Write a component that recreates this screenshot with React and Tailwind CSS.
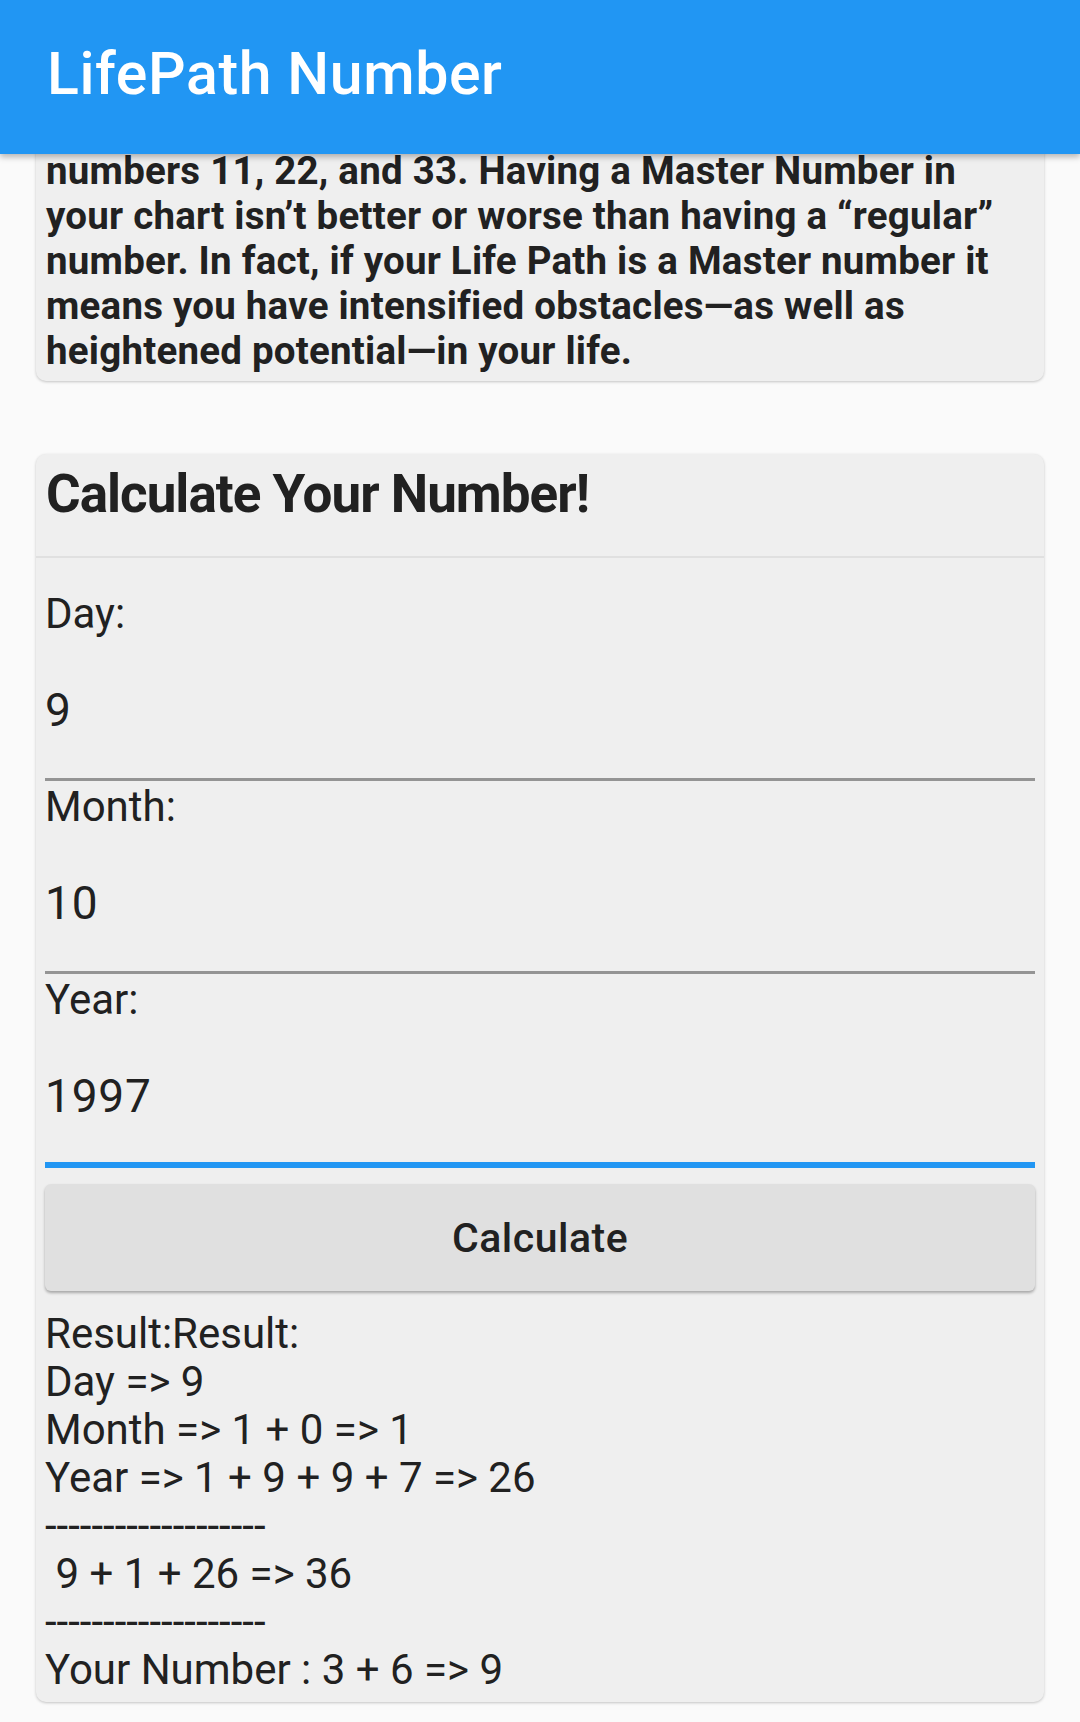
import React from "react";

const intro = [
  "numbers 11, 22, and 33. Having a Master Number in",
  "your chart isn’t better or worse than having a “regular”",
  "number. In fact, if your Life Path is a Master number it",
  "means you have intensified obstacles—as well as",
  "heightened potential—in your life.",
];

const fields = [
  { label: "Day:", value: "9" },
  { label: "Month:", value: "10" },
  { label: "Year:", value: "1997", focused: true },
];

const result = [
  "Result:Result:",
  "Day => 9",
  "Month => 1 + 0 => 1",
  "Year => 1 + 9 + 9 + 7 => 26",
  "-------------------",
  " 9 + 1 + 26 => 36",
  "-------------------",
  "Your Number : 3 + 6 => 9",
];

function Field({ label, value, focused }) {
  return (
    <div className="mt-[4px] first:mt-[34px]">
      <div className="text-[42px] leading-[43px]">{label}</div>
      <div
        className={
          focused
            ? "pt-[50px] pb-[40px] border-b-[6px] border-[#2196f3]"
            : "pt-[50px] pb-[42px] border-b-[3px] border-[#949494]"
        }
      >
        <div className="text-[46px] leading-[51px] tracking-[0.8px]">{value}</div>
      </div>
    </div>
  );
}

export default function App() {
  return (
    <div className="h-[1722px] overflow-hidden bg-[#fafafa] font-['Roboto',sans-serif] text-[#212121]">
      <header className="relative z-10 h-[154px] bg-[#2196f3] pl-[47px] pt-[39px] shadow-[0_3px_6px_rgba(0,0,0,0.28)]">
        <h1 className="text-[59px] font-medium leading-[69px] tracking-[0.6px] text-white">LifePath Number</h1>
      </header>

      <section className="mx-[36px] -mt-[20px] rounded-[10px] bg-[#efefef] px-[10px] pt-[14px] pb-[8px] shadow-[0_1px_3px_rgba(0,0,0,0.22)]">
        {intro.map((line, i) => (
          <div key={i} className="whitespace-nowrap text-[38.5px] font-bold leading-[45px] tracking-[0.22px]">
            {line}
          </div>
        ))}
      </section>

      <section className="mx-[36px] mt-[73px] rounded-[10px] bg-[#efefef] pb-[8px] shadow-[0_1px_3px_rgba(0,0,0,0.22)]">
        <div className="px-[10px] pt-[9px] pb-[31px]">
          <h2 className="text-[53px] font-bold leading-[62px] tracking-[-1px]">Calculate Your Number!</h2>
        </div>
        <div className="h-[2px] bg-[#e0e0e0]" />

        <div className="px-[9px]">
          {fields.map((f) => (
            <Field key={f.label} {...f} />
          ))}

          <button className="mt-[16px] flex h-[107px] w-full items-center justify-center rounded-[6px] bg-[#e0e0e0] shadow-[0_2px_3px_rgba(0,0,0,0.3)]">
            <span className="text-[41px] font-medium leading-[48px] tracking-[0.5px] text-[#212121]">Calculate</span>
          </button>

          <div className="mt-[19px]">
            {result.map((line, i) => (
              <div key={i} className="whitespace-pre text-[42px] leading-[48px]">
                {line}
              </div>
            ))}
          </div>
        </div>
      </section>
    </div>
  );
}
